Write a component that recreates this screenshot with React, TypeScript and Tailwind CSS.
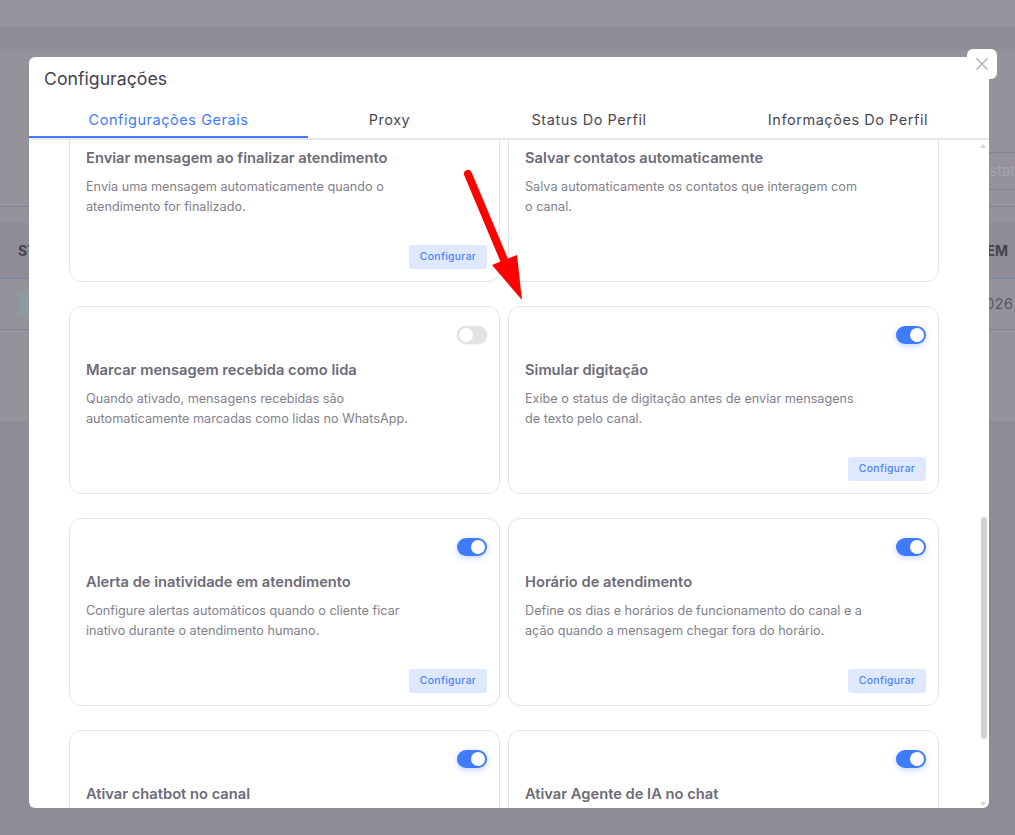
import React from "react";

type CardProps = { title: string; desc: string[]; toggle?: "on" | "off"; action?: boolean };

function Toggle({ on }: { on: boolean }) {
  return on ? (
    <div className="flex h-[18px] w-[30px] items-center justify-end rounded-full bg-[#3f7bfb] pr-[2px] shadow-[0_2px_6px_rgba(63,123,251,0.3)]">
      <div className="h-[14px] w-[14px] rounded-full bg-white" />
    </div>
  ) : (
    <div className="flex h-[18px] w-[30px] items-center rounded-full bg-[#e3e3e5] pl-[2px] shadow-[0_0_2px_rgba(0,0,0,0.12)]">
      <div className="h-[14px] w-[14px] rounded-full bg-white" />
    </div>
  );
}

function Card({ title, desc, toggle, action }: CardProps) {
  return (
    <div className="flex h-[188px] flex-col rounded-xl border border-[#e4e4e7] bg-white pt-[19px] pr-3 pl-4">
      <div className="flex h-[18px] justify-end">{toggle && <Toggle on={toggle === "on"} />}</div>
      <div className="mt-[15px] text-[14.7px] leading-[22px] font-semibold text-[#6d6b77]">{title}</div>
      <div className="mt-[8px] text-[12.66px] leading-[20px] text-[#82808b]">
        {desc.map((d) => (
          <div key={d}>{d}</div>
        ))}
      </div>
      {action && (
        <div className="mt-auto mb-3 flex justify-end">
          <div className="flex h-6 w-[78px] items-center justify-center rounded-[3px] bg-[#dfe9fe] text-[10.4px] font-medium tracking-[0.3px] text-[#4c83f6]">
            Configurar
          </div>
        </div>
      )}
    </div>
  );
}

const tabs = [
  { label: "Configurações Gerais", width: "w-[279px]" },
  { label: "Proxy", width: "w-[163px]" },
  { label: "Status Do Perfil", width: "w-[236px]" },
  { label: "Informações Do Perfil", width: "w-[282px]" },
];

export default function App() {
  return (
    <div className="relative h-[835px] w-[1015px] overflow-hidden bg-[#928f9a] font-['Inter','Liberation_Sans',sans-serif]">
      {/* Page behind the dialog */}
      <div className="h-[26px] bg-[#97949e]" />
      <div className="h-[24px] bg-[#8f8c97]" />
      <div className="h-[156px] bg-[#95929c] pt-[102px]">
        <div className="ml-auto flex h-[38px] w-[300px] items-center border-y border-[#85828d] pl-[274px] text-[15px] text-[#a5a2ac]">
          stat
        </div>
      </div>
      <div className="h-[215px] border-t border-[#85828d] bg-[#95929c] pt-[16px]">
        <div className="flex h-[56px] items-center justify-between border-b border-[#7c83a8] bg-[#8f8c97] pr-[7px] pl-[18px] text-[14px] font-bold text-[#45434f]">
          <span>ST</span>
          <span>EM</span>
        </div>
        <div className="flex h-[51px] items-center justify-between border-b border-[#85828d] pr-[2px] pl-[18px] text-[15px] text-[#5b5965]">
          <div className="h-6 w-6 rounded-[4px] bg-[#8b9b9e]" />
          <span>2026</span>
        </div>
      </div>
      <div className="h-[414px] bg-[#8f8c97]" />

      {/* Dialog */}
      <div className="absolute inset-0 pt-[57px] pl-[29px]">
        <div className="relative flex h-[751px] w-[960px] flex-col overflow-hidden rounded-[6px] bg-white">
          <div className="h-[43px] shrink-0 pt-[10px] pl-[15px] text-[17.7px] leading-[24px] text-[#45434f]">Configurações</div>
          <div className="flex h-[40px] shrink-0 border-b-2 border-[#e8e8ea]">
            {tabs.map((t, i) => (
              <div
                key={t.label}
                className={`flex ${t.width} items-center justify-center pt-[3px] text-[14.5px] font-normal tracking-[0.55px] ${
                  i === 0 ? "border-b-2 border-[#3f7bfb] text-[#3f7bfb]" : "pb-[2px] text-[#4b4955]"
                }`}
              >
                {t.label}
              </div>
            ))}
          </div>
          <div className="relative min-h-0 flex-1 overflow-hidden">
            <div className="-mt-[46px] ml-[40px] grid w-[870px] grid-cols-[431px_431px] gap-x-2 gap-y-6">
              <Card title="Enviar mensagem ao finalizar atendimento" desc={["Envia uma mensagem automaticamente quando o", "atendimento for finalizado."]} action />
              <Card title="Salvar contatos automaticamente" desc={["Salva automaticamente os contatos que interagem com", "o canal."]} />
              <Card title="Marcar mensagem recebida como lida" desc={["Quando ativado, mensagens recebidas são", "automaticamente marcadas como lidas no WhatsApp."]} toggle="off" />
              <Card title="Simular digitação" desc={["Exibe o status de digitação antes de enviar mensagens", "de texto pelo canal."]} toggle="on" action />
              <Card title="Alerta de inatividade em atendimento" desc={["Configure alertas automáticos quando o cliente ficar", "inativo durante o atendimento humano."]} toggle="on" action />
              <Card title="Horário de atendimento" desc={["Define os dias e horários de funcionamento do canal e a", "ação quando a mensagem chegar fora do horário."]} toggle="on" action />
              <Card title="Ativar chatbot no canal" desc={[]} toggle="on" />
              <Card title="Ativar Agente de IA no chat" desc={[]} toggle="on" />
            </div>
            {/* Scrollbar */}
            <div className="absolute top-[377px] right-[2px] h-[222px] w-[6px] rounded-[3px] bg-[#d2d2d2]" />
            <svg className="absolute top-[4px] right-[3px]" width="6" height="4" viewBox="0 0 6 4"><path d="M3 0 6 4H0z" fill="#d6d6d6" /></svg>
            <svg className="absolute right-[3px] bottom-[2px]" width="6" height="4" viewBox="0 0 6 4"><path d="M0 0h6L3 4z" fill="#d6d6d6" /></svg>
          </div>
        </div>
      </div>

      {/* Close button */}
      <div className="absolute top-[49px] left-[967px] flex h-[30px] w-[30px] items-center justify-center rounded-[6px] bg-white">
        <svg width="12" height="12" viewBox="0 0 12 12"><path d="M.5.5l11 11M11.5.5l-11 11" stroke="#a9a9ad" strokeWidth="1.1" fill="none" /></svg>
      </div>

      {/* Annotation arrow */}
      <svg className="absolute top-0 left-0" width="1015" height="835" viewBox="0 0 1015 835">
        <path d="M468 174 505 262" stroke="#ff0000" strokeWidth="8" strokeLinecap="round" fill="none" />
        <path d="M492 265 517 255 522 300z" fill="#ff0000" />
      </svg>
    </div>
  );
}
